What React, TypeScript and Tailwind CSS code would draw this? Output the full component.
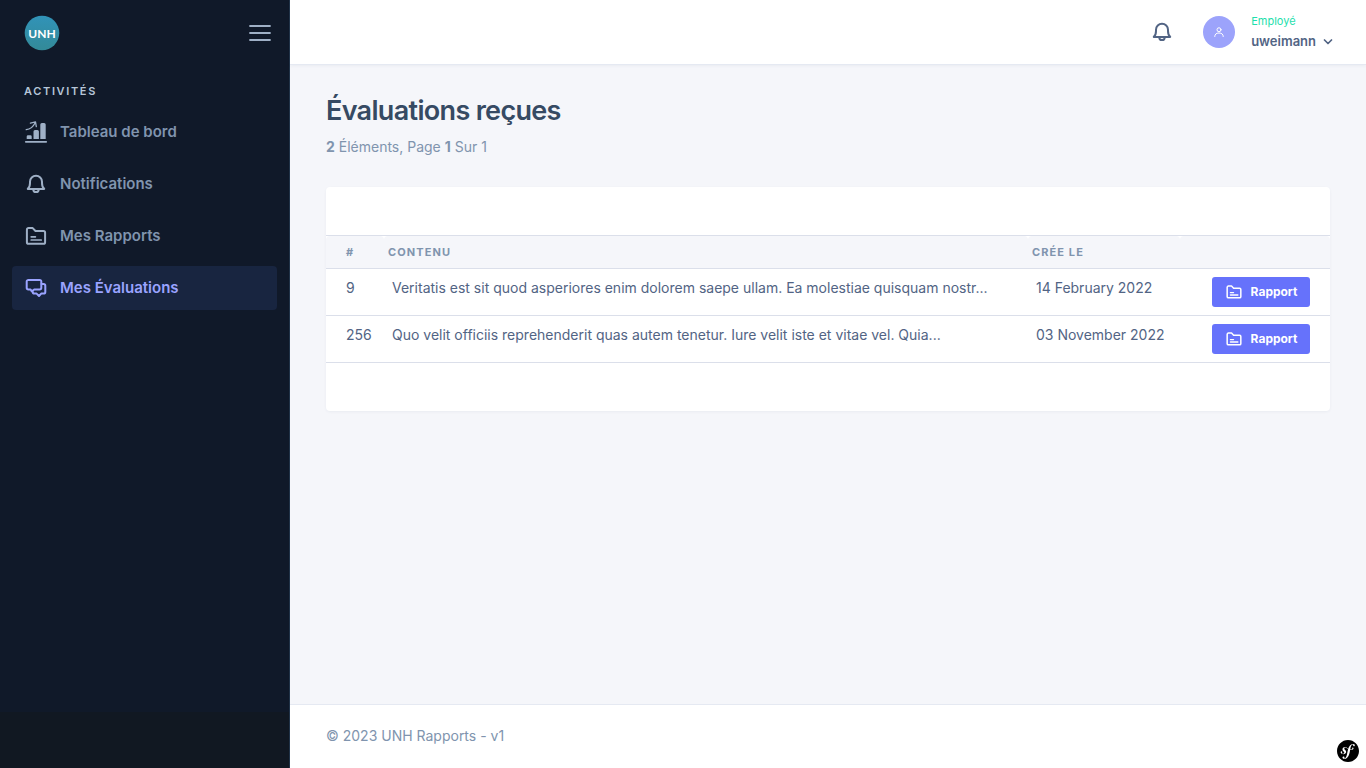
import type { ReactNode } from 'react';
import { SiSymfony } from 'react-icons/si';

type IconProps = { className?: string };

function Svg({ className, children }: IconProps & { children: ReactNode }) {
  return (
    <svg
      viewBox="0 0 24 24"
      fill="none"
      stroke="currentColor"
      strokeWidth="1.8"
      strokeLinecap="round"
      strokeLinejoin="round"
      aria-hidden="true"
      className={className}
    >
      {children}
    </svg>
  );
}

function GrowthIcon({ className }: IconProps) {
  return (
    <Svg className={className}>
      <path d="M1.8 21.8H22.2" />
      <path d="M2.2 9.7C6 9.4 9 7.2 11.2 2.8M6.4 3.1 11.5 1.9 12.3 6.7" strokeWidth="1.3" />
      <path
        d="M2.7 19v-2.500a1.3 1.3 0 0 1 1.3-1.3h2.4a1.3 1.3 0 0 1 1.3 1.3v2.500zM9.5 19v-7.4a1.5 1.5 0 0 1 1.5-1.5h2.4a1.5 1.5 0 0 1 1.5 1.5V19zM16.3 19V4.6A1.6 1.6 0 0 1 17.9 3h2.2a1.6 1.6 0 0 1 1.6 1.6V19z"
        fill="currentColor"
        stroke="none"
      />
    </Svg>
  );
}

function BellIcon({ className }: IconProps) {
  return (
    <Svg className={className}>
      <path
        d="M3.8 16.9C5.6 15.5 6 13.6 6 11V9.7a6 6 0 0 1 12 0V11c0 2.6.4 4.5 2.2 5.9z"
        strokeWidth="2"
      />
      <path d="M9.3 17.2a2.7 2.900 0 0 0 5.4 0" strokeWidth="2" />
    </Svg>
  );
}

function FolderIcon({ className }: IconProps) {
  return (
    <Svg className={className}>
      <path
        d="M2.900 5.700A1.600 1.600 0 0 1 4.500 4.100H8.700l2.800 2.900h8a1.600 1.600 0 0 1 1.600 1.600v9.600a1.600 1.600 0 0 1-1.600 1.600h-15a1.600 1.600 0 0 1-1.600-1.600z"
        strokeWidth="2"
      />
      <path d="M7.200 12.800h4.200M7.200 16h10" strokeWidth="1.700" />
    </Svg>
  );
}

function ChatIcon({ className }: IconProps) {
  return (
    <Svg className={className}>
      <path
        d="M4.400 3.900h11.200a1.700 1.700 0 0 1 1.700 1.700v6.200a1.700 1.700 0 0 1-1.700 1.700h-5.400L7.800 15.400 6.600 13.500H4.400a1.700 1.700 0 0 1-1.700-1.700V5.600a1.700 1.700 0 0 1 1.700-1.700z"
        strokeWidth="2"
      />
      <path
        d="M17.600 8h2a1.700 1.700 0 0 1 1.700 1.700v6.200a1.700 1.700 0 0 1-1.700 1.700h-2.400L15 20l-2.400-2.400h-2.200a1.700 1.700 0 0 1-1.600-1.700"
        strokeWidth="2"
      />
    </Svg>
  );
}

function UserIcon({ className }: IconProps) {
  return (
    <Svg className={className}>
      <circle cx="12" cy="7.500" r="4" strokeWidth="2" />
      <path d="M3.500 21a8.500 7 0 0 1 17 0" strokeWidth="2" />
    </Svg>
  );
}

function Logo() {
  return (
    <svg viewBox="0 0 36 36" className="size-9" role="img" aria-label="UNH">
      <defs>
        <linearGradient id="logo-fill" x1="0" y1="0" x2="0" y2="1">
          <stop offset="0" stopColor="#3193b8" />
          <stop offset="1" stopColor="#338a98" />
        </linearGradient>
      </defs>
      <circle cx="18" cy="18" r="17.300" fill="url(#logo-fill)" />
      <text x="18" y="23" textAnchor="middle" fontFamily="Lato, sans-serif" fontWeight="700" fontSize="12" fill="#fff">
        UNH
      </text>
    </svg>
  );
}

const menu = [
  { label: 'Tableau de bord', Icon: GrowthIcon, active: false },
  { label: 'Notifications', Icon: BellIcon, active: false },
  { label: 'Mes Rapports', Icon: FolderIcon, active: false },
  { label: 'Mes Évaluations', Icon: ChatIcon, active: true },
];

const rows = [
  {
    id: 9,
    content: 'Veritatis est sit quod asperiores enim dolorem saepe ullam. Ea molestiae quisquam nostr...',
    date: '14 February 2022',
  },
  {
    id: 256,
    content: 'Quo velit officiis reprehenderit quas autem tenetur. Iure velit iste et vitae vel. Quia...',
    date: '03 November 2022',
  },
];

function Sidebar() {
  return (
    <aside className="flex w-[290px] shrink-0 flex-col border-r border-[#203247] bg-[#111822]">
      <div className="flex-1 bg-[#101929]">
        <div className="flex h-[65px] items-center justify-between pr-[17px] pl-6">
          <a href="#accueil">
            <Logo />
          </a>
          <button type="button" aria-label="Menu" className="text-[#9fb0c6]">
            <Svg className="size-6">
              <path d="M2 5H22M2 12H22M2 19H22" />
            </Svg>
          </button>
        </div>
        <nav className="px-3 pt-4">
          <h2 className="px-3 pb-[9px] text-[11px] leading-5 font-semibold tracking-[0.15em] text-[#b6c6d8] uppercase">
            Activités
          </h2>
          <ul className="flex flex-col gap-2">
            {menu.map(({ label, Icon, active }) => (
              <li key={label}>
                <a
                  href="#menu"
                  aria-current={active ? 'page' : undefined}
                  className={
                    active
                      ? 'flex h-11 items-center gap-3 rounded bg-[#182540] px-3 text-[15px] font-semibold text-[#9aa3ff]'
                      : 'flex h-11 items-center gap-3 rounded px-3 text-[15px] font-semibold text-[#8094ae]'
                  }
                >
                  <Icon className={active ? 'size-6' : 'size-6 text-[#9fb0c6]'} />
                  {label}
                </a>
              </li>
            ))}
          </ul>
        </nav>
      </div>
      <div className="h-14" />
    </aside>
  );
}

function Header() {
  return (
    <header className="flex h-[65px] shrink-0 items-center justify-end border-b border-[#e5e9f2] bg-white pr-8 shadow-[0_1px_3px_rgba(54,74,99,0.06)]">
      <button type="button" aria-label="Notifications" className="mr-[29px] text-[#526484]">
        <BellIcon className="size-6" />
      </button>
      <button type="button" className="flex items-center gap-4 text-left">
        <span className="flex size-8 items-center justify-center rounded-full bg-[#9ca3fb] text-white">
          <UserIcon className="size-3" />
        </span>
        <span className="flex flex-col gap-1 pb-0.5">
          <span className="text-[11px] leading-4 text-[#1ee0ac]">Employé</span>
          <span className="flex items-center gap-1.5 text-[13px] leading-4 font-semibold text-[#526484]">
            uweimann
            <Svg className="size-3">
              <path d="M5 10 12 17 19 10" strokeWidth="3.500" />
            </Svg>
          </span>
        </span>
      </button>
    </header>
  );
}

function EvaluationsTable() {
  return (
    <div className="rounded bg-white py-12 shadow-[0_1px_3px_rgba(54,74,99,0.06)]">
      <table className="w-full border-separate border-spacing-0 border-t border-[#dbdfea] text-left text-sm leading-[22px] text-[#526484]">
        <thead>
          <tr className="text-[11px] leading-4 tracking-widest text-[#8094ae] uppercase">
            <th className="h-[33px] w-[58px] rounded-t border-b border-[#dbdfea] bg-[#f5f6fa] pr-1 pl-5 font-bold">#</th>
            <th className="rounded-t border-b border-[#dbdfea] bg-[#f5f6fa] px-1 font-bold">Contenu</th>
            <th className="w-[152px] rounded-t border-b border-[#dbdfea] bg-[#f5f6fa] px-1 font-bold">Crée le</th>
            <th className="w-[150px] rounded-t border-b border-[#dbdfea] bg-[#f5f6fa]" aria-label="Actions" />
          </tr>
        </thead>
        <tbody>
          {rows.map((row) => (
            <tr key={row.id} className="align-top">
              <td className="border-b border-[#dbdfea] py-2 pr-2 pl-5">{row.id}</td>
              <td className="border-b border-[#dbdfea] p-2">{row.content}</td>
              <td className="border-b border-[#dbdfea] p-2 whitespace-nowrap">{row.date}</td>
              <td className="border-b border-[#dbdfea] py-2 pr-5">
                <button
                  type="button"
                  className="ml-auto flex h-[30px] w-[98px] items-center justify-center gap-2 rounded-[3px] bg-[#6672fb] text-xs font-bold text-white"
                >
                  <FolderIcon className="size-[18px]" />
                  Rapport
                </button>
              </td>
            </tr>
          ))}
        </tbody>
      </table>
    </div>
  );
}

export default function App() {
  return (
    <div className="flex min-h-screen bg-[#f5f6fa] font-['Inter','Liberation_Sans',sans-serif] text-[#526484]">
      <Sidebar />
      <div className="flex min-w-0 flex-1 flex-col">
        <Header />
        <main className="flex-1 px-9 pt-7">
          <h1 className="text-[27px] leading-9 font-semibold tracking-tight text-[#364a63]">Évaluations reçues</h1>
          <p className="pt-1.5 pb-7 text-sm leading-6 text-[#8094ae]">
            <strong>2</strong> Éléments, Page <strong>1</strong> Sur 1
          </p>
          <EvaluationsTable />
        </main>
        <footer className="border-t border-[#e5e9f2] bg-white px-9 pt-5 pb-[21px] text-sm leading-[22px] text-[#8094ae]">
          © 2023 UNH Rapports - v1
        </footer>
      </div>
      <button type="button" aria-label="Symfony" className="fixed right-[7px] bottom-1.5 text-black">
        <SiSymfony className="size-[22px]" />
      </button>
    </div>
  );
}
